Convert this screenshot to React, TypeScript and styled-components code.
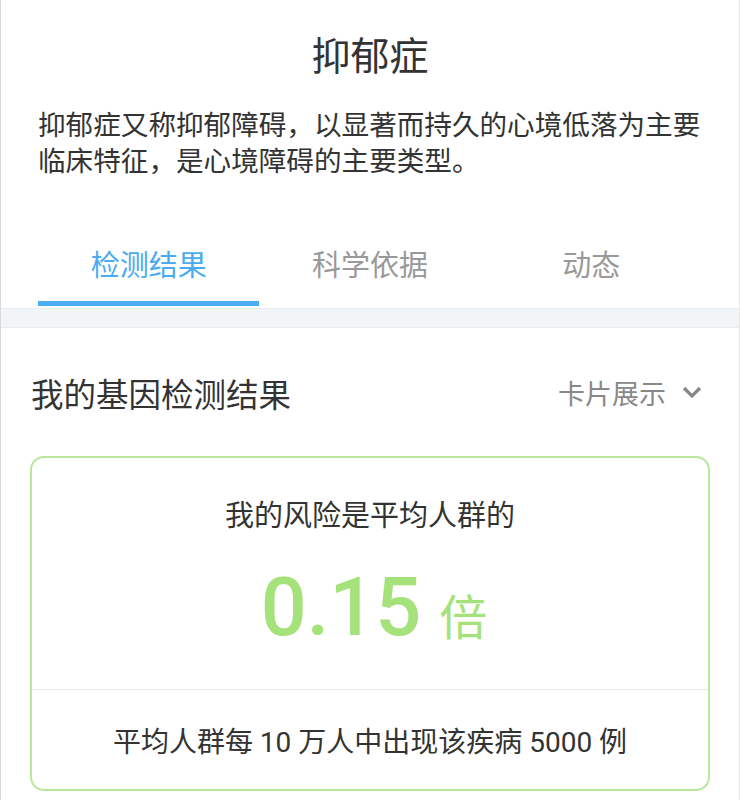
import React from "react";
import styled, { createGlobalStyle } from "styled-components";

const Global = createGlobalStyle`
  html, body { margin: 0; padding: 0; background: #fff; }
  body { font-family: Roboto, "Noto Sans CJK SC", sans-serif; color: #333; }
`;

const Page = styled.div`
  width: 740px;
  min-height: 800px;
  box-sizing: border-box;
  border-left: 1px solid #d9d9d9;
  border-right: 1px solid #e6e6e6;
  background: #fff;
`;

const Header = styled.header`
  padding: 29px 37px 0 37px;
`;

const Title = styled.h1`
  margin: 0;
  text-align: center;
  font-size: 39px;
  line-height: 56px;
  font-weight: 400;
  color: #333;
`;

const Desc = styled.p`
  margin: 23px 0 0 0;
  font-size: 27.6px;
  line-height: 36px;
  color: #333;
  letter-spacing: 0;
`;

const Tabs = styled.nav`
  display: grid;
  grid-template-columns: repeat(3, 1fr);
  margin-top: 66px;
`;

const Tab = styled.div<{ $active?: boolean }>`
  display: flex;
  flex-direction: column;
  align-items: center;
  font-size: 29px;
  line-height: 40px;
  color: ${(p) => (p.$active ? "#4aabf0" : "#999")};
  &::after {
    content: "";
    align-self: stretch;
    height: 5px;
    margin-top: 15px;
    background: ${(p) => (p.$active ? "#4aaef4" : "transparent")};
  }
`;

const Band = styled.div`
  height: 18px;
  margin-top: 2px;
  background: #f2f5f8;
  border-top: 1px solid #e9ecef;
  border-bottom: 1px solid #e9ecef;
`;

const Section = styled.section`
  padding: 0 29px;
`;

const SectionHead = styled.div`
  height: 128px;
  display: flex;
  align-items: center;
  justify-content: space-between;
`;

const SectionTitle = styled.h2`
  margin: 0;
  font-size: 32.5px;
  font-weight: 400;
  color: #333;
  padding-left: 1px;
`;

const ViewSwitch = styled.div`
  display: flex;
  align-items: center;
  gap: 16px;
  font-size: 27px;
  color: #888;
  padding-right: 8px;
`;

const Card = styled.div`
  border: 2px solid #b9e89c;
  border-radius: 14px;
  overflow: hidden;
`;

const CardTop = styled.div`
  padding: 38px 0 28px;
  display: flex;
  flex-direction: column;
  align-items: center;
  border-bottom: 1px solid #e6e6e6;
`;

const RiskLabel = styled.div`
  font-size: 29px;
  line-height: 40px;
  color: #333;
`;

const RiskValue = styled.div`
  margin-top: 30px;
  display: flex;
  align-items: baseline;
  color: #a6e27b;
  line-height: 84px;
  padding-left: 8px;
`;

const Number = styled.span`
  font-family: Roboto, sans-serif;
  font-size: 81px;
  font-weight: 500;
`;

const Unit = styled.span`
  font-size: 48px;
  margin-left: 18px;
`;

const CardBottom = styled.div`
  height: 99px;
  display: flex;
  align-items: center;
  justify-content: center;
  font-size: 28px;
  color: #333;
`;

const Chevron = () => (
  <svg width="20" height="14" viewBox="0 0 20 14" aria-hidden>
    <polyline points="2,3 10,11 18,3" fill="none" stroke="#888" strokeWidth="3.2" />
  </svg>
);

export default function App() {
  return (
    <>
      <Global />
      <Page>
        <Header>
          <Title>抑郁症</Title>
          <Desc>抑郁症又称抑郁障碍，以显著而持久的心境低落为主要临床特征，是心境障碍的主要类型。</Desc>
          <Tabs>
            <Tab $active>检测结果</Tab>
            <Tab>科学依据</Tab>
            <Tab>动态</Tab>
          </Tabs>
        </Header>
        <Band />
        <Section>
          <SectionHead>
            <SectionTitle>我的基因检测结果</SectionTitle>
            <ViewSwitch>
              卡片展示
              <Chevron />
            </ViewSwitch>
          </SectionHead>
          <Card>
            <CardTop>
              <RiskLabel>我的风险是平均人群的</RiskLabel>
              <RiskValue>
                <Number>0.15</Number>
                <Unit>倍</Unit>
              </RiskValue>
            </CardTop>
            <CardBottom>平均人群每 10 万人中出现该疾病 5000 例</CardBottom>
          </Card>
        </Section>
      </Page>
    </>
  );
}
